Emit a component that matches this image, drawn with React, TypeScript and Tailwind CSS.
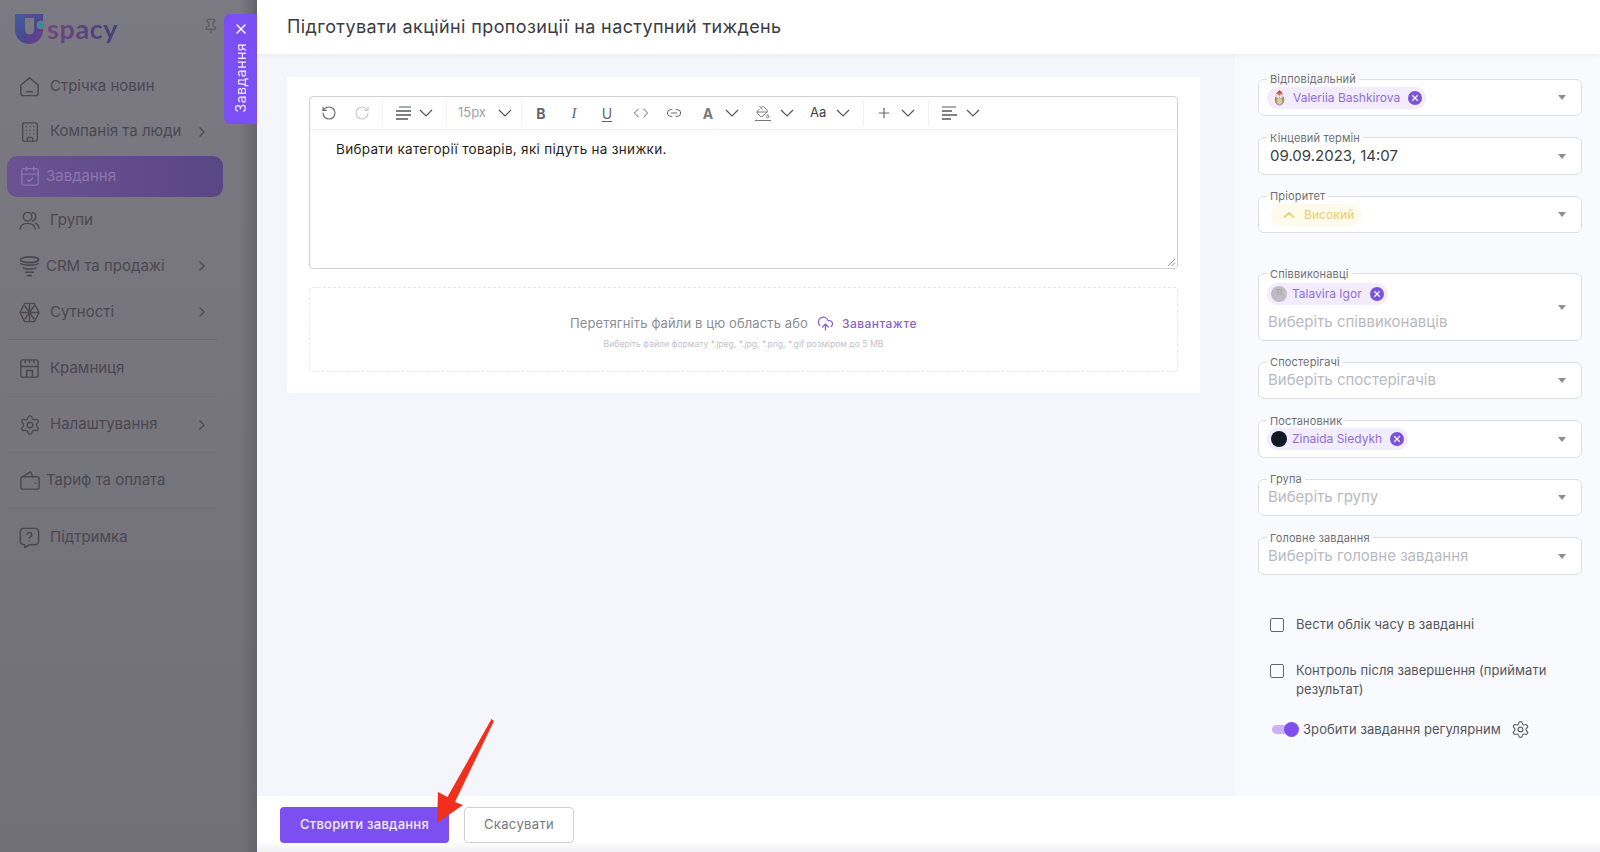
import { ReactNode } from 'react';
import {
  Building,
  CalendarCheck,
  ChevronRight,
  ChevronUp,
  Code,
  Link2,
  PaintBucket,
  Pin,
  Plus,
  RotateCcw,
  RotateCw,
  Settings,
  UploadCloud,
  X,
} from 'lucide-react';

function HomeIcon() {
  return (
    <svg viewBox="0 0 24 24" className="h-[23px] w-[23px] shrink-0" fill="none" stroke="currentColor" strokeWidth="1.5" strokeLinejoin="round" strokeLinecap="round">
      <path d="M3 10.5 12 3l9 7.5V19a2.5 2.5 0 0 1-2.5 2.5h-13A2.5 2.5 0 0 1 3 19z" />
      <path d="M9 17.5h6" />
    </svg>
  );
}

function GroupIcon() {
  return (
    <svg viewBox="0 0 24 24" className="h-[23px] w-[23px] shrink-0" fill="none" stroke="currentColor" strokeWidth="1.5" strokeLinecap="round">
      <circle cx="10" cy="8" r="4.5" />
      <path d="M15 3.6a4.5 4.5 0 0 1 0 8.8" />
      <path d="M2 21c.6-4 3.8-6 8-6s7.4 2 8 6" />
      <path d="M18 15c2.2.6 3.6 2.6 4 5" />
    </svg>
  );
}

function CrmIcon() {
  return (
    <svg viewBox="0 0 24 24" className="h-[23px] w-[23px] shrink-0" fill="none" stroke="currentColor" strokeWidth="1.7" strokeLinecap="round">
      <ellipse cx="12" cy="5" rx="9.500" ry="3" />
      <path d="M3 9c1.500 2 16.500 2 18 0" />
      <path d="M5.500 13.500c2 1.500 11 1.500 13 0" />
      <path d="M8 18h8M10 21.500h4" />
    </svg>
  );
}

function EntityIcon() {
  return (
    <svg viewBox="0 0 24 24" className="h-[23px] w-[23px] shrink-0" fill="none" stroke="currentColor" strokeWidth="1.5" strokeLinejoin="round">
      <path d="M7 2.500h10l5 9.500-5 9.500H7L2 12z" />
      <path d="M12 2.500v19M2 12h20M7 5l10 14M17 5 7 19" />
    </svg>
  );
}

function StoreIcon() {
  return (
    <svg viewBox="0 0 24 24" className="h-[23px] w-[23px] shrink-0" fill="none" stroke="currentColor" strokeWidth="1.5" strokeLinejoin="round">
      <rect x="3" y="3" width="18" height="18" rx="2" />
      <path d="M3 10h18M7.500 3v3.500M12 3v3.500M16.500 3v3.500M9 21v-7h6v7" />
    </svg>
  );
}

function WalletIcon() {
  return (
    <svg viewBox="0 0 24 24" className="h-[23px] w-[23px] shrink-0" fill="none" stroke="currentColor" strokeWidth="1.5" strokeLinejoin="round" strokeLinecap="round">
      <path d="M3 10a2 2 0 0 1 2-2h15a2 2 0 0 1 2 2v9a2 2 0 0 1-2 2H5a2 2 0 0 1-2-2z" />
      <path d="M4 8.500 13 3l2.500 5" />
      <path d="M18 15h.01" />
    </svg>
  );
}

function SupportIcon() {
  return (
    <svg viewBox="0 0 24 24" className="h-[23px] w-[23px] shrink-0" fill="none" stroke="currentColor" strokeWidth="1.5" strokeLinejoin="round" strokeLinecap="round">
      <path d="M6 2.500h12A3.500 3.500 0 0 1 21.500 6v10a3.500 3.500 0 0 1-3.500 3.500h-6L7 22.500v-3H6A3.500 3.500 0 0 1 2.500 16V6A3.500 3.500 0 0 1 6 2.500z" />
      <path d="M9.500 8.500a2.500 2.500 0 0 1 4.900.700c0 1.600-2.400 2-2.400 3.300" />
      <path d="M12 15.500h.01" />
    </svg>
  );
}

function Logo() {
  return (
    <div className="flex items-center">
      <svg viewBox="0 0 30 30" className="h-[30px] w-[30px] shrink-0">
        <defs>
          <linearGradient id="ulogo" x1="0" y1="0" x2="1" y2="1">
            <stop offset="0" stopColor="#3f5f9c" />
            <stop offset="0.6" stopColor="#4d4790" />
            <stop offset="1" stopColor="#7a3a86" />
          </linearGradient>
        </defs>
        <path d="M1 0h10v16a4.500 4.500 0 0 0 9 0V0h9v16a14 14 0 0 1-28 0z" fill="url(#ulogo)" />
        <rect x="11" y="0" width="9" height="4" fill="#5a4a88" />
        <circle cx="27" cy="11" r="3.800" fill="#3f8a94" stroke="#7b7981" strokeWidth="1" />
      </svg>
      <span className="ml-[3px] bg-gradient-to-r from-[#74447f] to-[#41407c] bg-clip-text pb-[2px] font-['Lato',sans-serif] text-[27px] leading-none font-bold tracking-[0.6px] text-transparent">
        spacy
      </span>
    </div>
  );
}

function NavItem({ icon, label, arrow, tight }: { icon: ReactNode; label: string; arrow?: boolean; tight?: boolean }) {
  return (
    <div className="flex h-full w-[257px] items-center pr-[47px] pl-[20px] text-[#4b4852]">
      <span className="flex w-[19px] justify-center">{icon}</span>
      <span className={tight ? 'ml-[7px] text-[15px]' : 'ml-[11px] text-[15px]'}>{label}</span>
      {arrow ? <ChevronRight className="ml-auto h-[16px] w-[16px]" strokeWidth={2} /> : null}
    </div>
  );
}

function Sidebar() {
  return (
    <aside className="relative w-[257px] shrink-0 bg-gradient-to-b from-[#7b7981] to-[#716f78]">
      <div className="absolute top-0 right-0 bottom-0 w-[17px] bg-gradient-to-r from-transparent to-[#65636c]" />
      <div className="flex h-[64px] items-start justify-between pt-[14px] pr-[38px] pl-[14px]">
        <Logo />
        <Pin className="mt-[4px] h-[16px] w-[16px] text-[#56545c]" strokeWidth={1.6} />
      </div>
      <div className="h-[45px]">
        <NavItem icon={<HomeIcon />} label="Стрічка новин" />
      </div>
      <div className="h-[45px]">
        <NavItem icon={<Building className="h-[22px] w-[22px] shrink-0" strokeWidth={1.5} />} label="Компанія та люди" arrow />
      </div>
      <div className="flex h-[44px] items-center">
        <div className="mx-[7px] flex h-[41px] w-[216px] items-center rounded-[10px] bg-gradient-to-r from-[#6b5391] to-[#5a4585] pl-[12px] text-[#8b76b0]">
          <CalendarCheck className="h-[22px] w-[22px]" strokeWidth={1.4} />
          <span className="ml-[5px] text-[15px]">Завдання</span>
        </div>
      </div>
      <div className="h-[45px]">
        <NavItem icon={<GroupIcon />} label="Групи" />
      </div>
      <div className="h-[46px]">
        <NavItem icon={<CrmIcon />} label="CRM та продажі" arrow tight />
      </div>
      <div className="mr-[40px] ml-[8px] h-[51px] border-b border-[#6e6c75] pb-[4px]">
        <div className="-ml-[8px] h-full">
          <NavItem icon={<EntityIcon />} label="Сутності" arrow />
        </div>
      </div>
      <div className="mr-[40px] ml-[8px] h-[57px] border-b border-[#6e6c75]">
        <div className="-ml-[8px] h-full">
          <NavItem icon={<StoreIcon />} label="Крамниця" />
        </div>
      </div>
      <div className="mr-[40px] ml-[8px] h-[56px] border-b border-[#6e6c75]">
        <div className="-ml-[8px] h-full">
          <NavItem icon={<Settings className="h-[22px] w-[22px] shrink-0" strokeWidth={1.5} />} label="Налаштування" arrow />
        </div>
      </div>
      <div className="mr-[40px] ml-[8px] h-[56px] border-b border-[#6e6c75]">
        <div className="-ml-[8px] h-full">
          <NavItem icon={<WalletIcon />} label="Тариф та оплата" tight />
        </div>
      </div>
      <div className="h-[57px]">
        <NavItem icon={<SupportIcon />} label="Підтримка" />
      </div>
      <div className="absolute top-[14px] right-0 flex h-[110px] w-[33px] flex-col items-center rounded-l-[6px] bg-[#7c4ff5] pt-[7px] text-white">
        <X className="h-[16px] w-[16px]" strokeWidth={2} />
        <span className="mt-[6px] rotate-180 text-[14px] tracking-[0.5px] text-[#f3edff] [writing-mode:vertical-rl]">Завдання</span>
      </div>
    </aside>
  );
}

function Sep({ ml }: { ml: string }) {
  return <span className={`h-[26px] w-px bg-[#f0f0f3] ${ml}`} />;
}

function Chevron({ ml }: { ml: string }) {
  return (
    <svg viewBox="0 0 14 8" className={`h-[8px] w-[14px] ${ml}`} fill="none" stroke="#4f5056" strokeWidth="1.1">
      <path d="M1 1l6 6 6-6" />
    </svg>
  );
}

// stacked lines of the two align menus
function AlignIcon({ ml, shifted }: { ml: string; shifted?: boolean }) {
  return (
    <svg viewBox="0 0 16 14" className={`h-[14px] w-[16px] ${ml}`} fill="none" stroke="#55565c">
      {shifted ? <path d="M4 1h12" strokeWidth="1" /> : <path d="M1 1h14" strokeWidth="1" />}
      {shifted ? <path d="M1 5h15" strokeWidth="1.500" /> : <path d="M1 5h10" strokeWidth="1.500" />}
      <path d="M1 9h15" strokeWidth="1.500" />
      {shifted ? <path d="M1 13h12" strokeWidth="1.500" /> : <path d="M1 13h9" strokeWidth="1.500" />}
    </svg>
  );
}

function Toolbar() {
  const ic = 'h-[16px] w-[16px] text-[#66676d]';
  return (
    <div className="flex h-[33px] items-center border-b border-[#eeeff2]">
      <RotateCcw className={`${ic} ml-[11px]`} strokeWidth={1.7} />
      <RotateCw className="ml-[17px] h-[16px] w-[16px] text-[#c8c9cd]" strokeWidth={1.7} />
      <Sep ml="ml-[12px]" />
      <AlignIcon ml="ml-[12px]" shifted />
      <Chevron ml="ml-[8px]" />
      <Sep ml="ml-[13px]" />
      <span className="ml-[11px] w-[27px] text-[13px] text-[#a2a3a8]">15px</span>
      <Chevron ml="ml-[13px]" />
      <Sep ml="ml-[9px]" />
      <span className="ml-[11px] w-[16px] text-center text-[14px] font-bold text-[#66676d]">B</span>
      <span className="ml-[17px] w-[16px] text-center font-['Liberation_Serif',serif] text-[15px] text-[#66676d] italic">I</span>
      <span className="ml-[17px] w-[16px] text-center text-[14px] text-[#66676d] underline underline-offset-2">U</span>
      <Code className={`${ic} ml-[18px]`} strokeWidth={1.5} />
      <Link2 className={`${ic} ml-[17px]`} strokeWidth={1.5} />
      <span className="ml-[18px] w-[16px] text-center text-[14px] font-bold text-[#77787e]">A</span>
      <Chevron ml="ml-[9px]" />
      <span className="relative ml-[16px] flex w-[16px] flex-col items-center border-b border-[#77787e] pb-[1px]">
        <PaintBucket className="h-[14px] w-[14px] text-[#77787e]" strokeWidth={1.7} />
      </span>
      <Chevron ml="ml-[9px]" />
      <span className="ml-[16px] w-[16px] text-center text-[13px] text-[#3f4045]">Aa</span>
      <Chevron ml="ml-[10px]" />
      <Sep ml="ml-[13px]" />
      <Plus className={`${ic} ml-[12px]`} strokeWidth={1.7} />
      <Chevron ml="ml-[9px]" />
      <Sep ml="ml-[13px]" />
      <AlignIcon ml="ml-[12px]" />
      <Chevron ml="ml-[9px]" />
    </div>
  );
}

function Editor() {
  return (
    <div className="flex h-[173px] flex-col rounded-[4px] border border-[#cfd1d6] bg-white">
      <Toolbar />
      <div className="relative flex-1 pt-[9px] pl-[26px] text-[13.500px] tracking-[0.3px] text-[#1f1f23]">
        Вибрати категорії товарів, які підуть на знижки.
        <svg viewBox="0 0 10 10" className="absolute right-[1px] bottom-[1px] h-[9px] w-[9px]" stroke="#8a8b90" strokeWidth="1">
          <path d="M1 9 9 1M5 9l4-4" />
        </svg>
      </div>
    </div>
  );
}

function DropZone() {
  return (
    <div className="mt-[18px] flex h-[85px] flex-col items-center rounded-[4px] border border-dashed border-[#e6e7ec] pt-[26px]">
      <div className="flex items-center text-[13px] tracking-[0.12px] text-[#8c8d94]">
        Перетягніть файли в цю область або
        <UploadCloud className="mr-[8px] ml-[9px] h-[17px] w-[17px] text-[#8a62c9]" strokeWidth={1.8} />
        <span className="text-[12px] font-medium tracking-[0.45px] text-[#8a62c9]">Завантажте</span>
      </div>
      <div className="mt-[4px] text-[8.600px] text-[#c2c3c8]">
        Виберіть файли формату *.jpeg, *.jpg, *.png, *.gif розміром до 5 MB
      </div>
    </div>
  );
}

function OwlAvatar() {
  return (
    <svg viewBox="0 0 16 16" className="h-[17px] w-[17px]">
      <ellipse cx="8" cy="10" rx="4.500" ry="5.500" fill="#a5906a" />
      <circle cx="6.500" cy="7" r="1.500" fill="#f2ead8" />
      <circle cx="9.500" cy="7" r="1.500" fill="#f2ead8" />
      <ellipse cx="8" cy="11.500" rx="2.500" ry="3" fill="#d8c9a6" />
      <path d="M4.500 4.500 8 1l3.500 3.500z" fill="#c8484a" />
    </svg>
  );
}

function Chip({ avatar, label }: { avatar: ReactNode; label: string }) {
  return (
    <span className="flex h-[22px] items-center rounded-full bg-[#f2ecfd] px-[4px] text-[12px] text-[#8f6fd6]">
      {avatar}
      <span className="ml-[5px]">{label}</span>
      <span className="ml-[8px] flex h-[14px] w-[14px] items-center justify-center rounded-full bg-[#7a50dc] text-white">
        <X className="h-[10px] w-[10px]" strokeWidth={3} />
      </span>
    </span>
  );
}

function Caret() {
  return <span className="ml-auto h-0 w-0 shrink-0 self-center border-x-[4.500px] border-t-[5px] border-x-transparent border-t-[#8d8e93]" />;
}

function Field({ label, children, tall }: { label: string; children?: ReactNode; tall?: boolean }) {
  return (
    <fieldset className="rounded-[6px] border border-[#dcdee3] bg-white pr-[15px] pl-[8px]">
      <legend className="px-[3px] text-[11px] leading-[14px] tracking-[0.15px] text-[#6e6f75]">{label}</legend>
      <div className={tall ? 'flex h-[59px] pb-[6px]' : 'flex h-[29px] items-center pb-[6px]'}>
        {children}
        <Caret />
      </div>
    </fieldset>
  );
}

function Hint({ children }: { children: string }) {
  return <span className="pl-[1px] text-[15px] text-[#b9bac0]">{children}</span>;
}

function Check({ children }: { children: ReactNode }) {
  return (
    <div className="flex items-start">
      <span className="mt-[3px] h-[14px] w-[14px] shrink-0 rounded-[2px] border-[1.500px] border-[#66676d]" />
      <span className="ml-[12px] text-[13px] leading-[19px] tracking-[0.05px] text-[#55565c]">{children}</span>
    </div>
  );
}

function RightPanel() {
  return (
    <aside className="w-[365px] shrink-0 bg-[#f9fafd] pt-[18px] pr-[18px] pl-[23px]">
      <div className="flex flex-col gap-[14.500px]">
        <Field label="Відповідальний">
          <Chip avatar={<OwlAvatar />} label="Valeriia Bashkirova" />
        </Field>
        <Field label="Кінцевий термін">
          <span className="pl-[3px] text-[15px] text-[#3c3d42]">09.09.2023, 14:07</span>
        </Field>
        <Field label="Пріоритет">
          <span className="ml-[4px] flex h-[22px] items-center rounded-full bg-[#fffbec] pr-[8px] pl-[9px] text-[12px] font-medium text-[#ecd27c]">
            <ChevronUp className="h-[18px] w-[18px]" strokeWidth={2.5} />
            <span className="ml-[6px]">Високий</span>
          </span>
        </Field>
        <div className="mt-[19px]">
          <Field label="Співвиконавці" tall>
            <div className="flex flex-col items-start pt-[2px]">
              <Chip
                avatar={
                  <span className="flex h-[16px] w-[16px] items-center justify-center rounded-full bg-[#bdbdc2] text-[7px] text-[#98989d]">TI</span>
                }
                label="Talavira Igor"
              />
              <div className="mt-[4px]">
                <Hint>Виберіть співвиконавців</Hint>
              </div>
            </div>
          </Field>
        </div>
        <Field label="Спостерігачі">
          <Hint>Виберіть спостерігачів</Hint>
        </Field>
        <Field label="Постановник">
          <Chip avatar={<span className="h-[16px] w-[16px] rounded-full bg-[#101a24]" />} label="Zinaida Siedykh" />
        </Field>
        <Field label="Група">
          <Hint>Виберіть групу</Hint>
        </Field>
        <Field label="Головне завдання">
          <Hint>Виберіть головне завдання</Hint>
        </Field>
      </div>
      <div className="mt-[40px] pl-[12px]">
        <Check>Вести облік часу в завданні</Check>
        <div className="mt-[27px]">
          <Check>
            Контроль після завершення (приймати
            <br />
            результат)
          </Check>
        </div>
        <div className="mt-[21px] flex items-center">
          <span className="relative ml-[2px] h-[9px] w-[22px] rounded-full bg-[#c9b2f5]">
            <span className="absolute top-[-3px] right-[-5px] h-[15px] w-[15px] rounded-full bg-[#7f50ef]" />
          </span>
          <span className="ml-[9px] text-[13px] tracking-[0.08px] text-[#55565c]">Зробити завдання регулярним</span>
          <Settings className="ml-[10px] h-[19px] w-[19px] text-[#66676d]" strokeWidth={1.5} />
        </div>
      </div>
    </aside>
  );
}

export default function App() {
  return (
    <div className="relative flex h-[852px] w-[1600px] overflow-hidden bg-white font-['Inter',sans-serif]">
      <Sidebar />
      <div className="flex min-w-0 flex-1 flex-col">
        <header className="z-10 flex h-[54px] shrink-0 items-center bg-white pb-[1px] pl-[30px] text-[18px] tracking-[0.39px] text-[#3b3c42] shadow-[0_1px_6px_rgba(0,0,0,0.06)]">
          Підготувати акційні пропозиції на наступний тиждень
        </header>
        <div className="flex min-h-0 flex-1">
          <main className="flex-1 bg-[#f5f6fb] pt-[23px] pr-[35px] pl-[30px]">
            <div className="h-[316px] rounded-[2px] bg-white px-[22px] pt-[19px]">
              <Editor />
              <DropZone />
            </div>
          </main>
          <RightPanel />
        </div>
        <footer className="flex h-[56px] shrink-0 items-start gap-[15px] bg-gradient-to-b from-white from-80% to-[#f0f0f2] pt-[11px] pl-[23px]">
          <button type="button" className="h-[36px] w-[169px] rounded-[4px] bg-[#7c4ff0] text-[13px] font-medium tracking-[0.25px] text-[#f3edff]">
            Створити завдання
          </button>
          <button type="button" className="h-[36px] w-[110px] rounded-[4px] border border-[#cfd0d4] bg-white text-[13px] tracking-[0.35px] text-[#77787e]">
            Скасувати
          </button>
        </footer>
      </div>
      <svg viewBox="0 0 70 110" className="pointer-events-none absolute top-[717px] left-[430px] h-[110px] w-[70px]">
        <path d="M61.500 2 64 4 25 85 33 88 7 106 8 75 17.500 80z" fill="#f0301c" />
      </svg>
    </div>
  );
}
